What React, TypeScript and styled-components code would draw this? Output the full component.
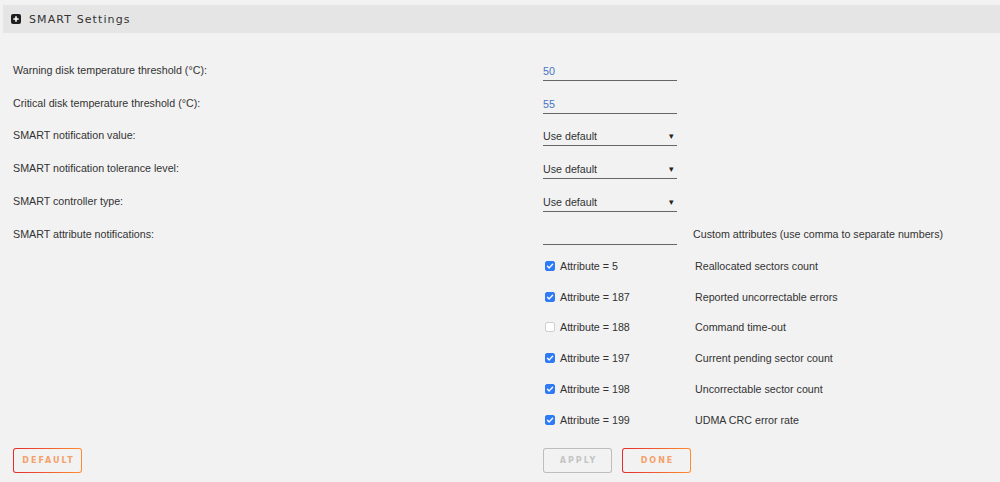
import React from 'react';
import styled, { createGlobalStyle } from 'styled-components';

const GlobalStyle = createGlobalStyle`
  html, body {
    margin: 0;
    padding: 0;
    background: #f2f2f2;
  }
  body {
    font-family: "Liberation Sans", Arial, sans-serif;
    color: #333;
  }
`;

const Page = styled.div`
  width: 1000px;
  height: 482px;
  padding: 5px 0 0 3px;
  box-sizing: border-box;
  overflow: hidden;
`;

const Header = styled.div`
  height: 28px;
  background: #e5e5e5;
  display: flex;
  align-items: center;
  gap: 8px;
  padding-left: 8px;
  box-sizing: border-box;
`;

const HeaderTitle = styled.span`
  font-family: "DejaVu Sans", sans-serif;
  font-size: 11px;
  letter-spacing: 1.1px;
  color: #333;
`;

const Form = styled.div`
  padding: 21px 0 0 10px;
`;

const Row = styled.div<{ $h?: number }>`
  display: grid;
  grid-template-columns: 514px 134px 1fr;
  column-gap: 16px;
  align-items: center;
  height: ${p => p.$h ?? 32.6}px;
  font-size: 10.7px;
`;

const Label = styled.div`
  color: #333;
`;

const Field = styled.div`
  height: 22px;
  border-bottom: 1px solid #666;
  box-sizing: border-box;
  display: flex;
  align-items: center;
  justify-content: space-between;
  padding: 3px 3px 0 0;
`;

const Value = styled.span`
  color: #4a72c4;
`;

const SelectText = styled.span`
  color: #333;
`;

const Arrow = styled.span`
  font-size: 8.5px;
  color: #222;
`;

const Note = styled.div`
  color: #333;
`;

const CheckCell = styled.label`
  display: flex;
  align-items: center;
  gap: 5px;
  padding-left: 2px;
  color: #333;
`;

const Box = styled.span<{ $on: boolean }>`
  width: 10px;
  height: 10px;
  border-radius: 2px;
  box-sizing: border-box;
  background: ${p => (p.$on ? '#2f7bf5' : '#fff')};
  border: 1px solid ${p => (p.$on ? '#2f7bf5' : '#d0d0d0')};
  display: flex;
  align-items: center;
  justify-content: center;
`;

const Desc = styled.div`
  padding-left: 2px;
  color: #333;
`;

const Buttons = styled.div`
  display: grid;
  grid-template-columns: 530px auto;
  margin-top: 13px;
`;

const ButtonGroup = styled.div`
  display: flex;
  gap: 10px;
`;

const Button = styled.button<{ $disabled?: boolean }>`
  width: 69px;
  height: 25px;
  border: 1px solid transparent;
  border-radius: 3px;
  background: ${p =>
    p.$disabled
      ? 'linear-gradient(#f2f2f2, #f2f2f2) padding-box, linear-gradient(#bdbdbd, #bdbdbd) border-box'
      : 'linear-gradient(#f2f2f2, #f2f2f2) padding-box, linear-gradient(90deg, #e22d2d, #ff8d33) border-box'};
  color: ${p => (p.$disabled ? '#c4c4c4' : '#f4a06a')};
  font-family: "DejaVu Sans", sans-serif;
  font-size: 8px;
  font-weight: bold;
  letter-spacing: 2px;
  padding: 0 0 0 2px;
  cursor: pointer;
`;

const PlusIcon = () => (
  <svg width="10" height="10" viewBox="0 0 10 10">
    <rect x="0" y="0" width="10" height="10" rx="2" fill="#1e1e1e" />
    <path d="M5 2.3v5.4M2.3 5h5.4" stroke="#fff" strokeWidth="1.6" />
  </svg>
);

const Check = () => (
  <svg width="8" height="8" viewBox="0 0 8 8">
    <path d="M1.5 4.2l1.7 1.7L6.6 2.2" fill="none" stroke="#fff" strokeWidth="1.4" strokeLinecap="round" strokeLinejoin="round" />
  </svg>
);

const attributes = [
  { id: 5, on: true, desc: 'Reallocated sectors count' },
  { id: 187, on: true, desc: 'Reported uncorrectable errors' },
  { id: 188, on: false, desc: 'Command time-out' },
  { id: 197, on: true, desc: 'Current pending sector count' },
  { id: 198, on: true, desc: 'Uncorrectable sector count' },
  { id: 199, on: true, desc: 'UDMA CRC error rate' },
];

const App: React.FC = () => {
  return (
    <Page>
      <GlobalStyle />
      <Header>
        <PlusIcon />
        <HeaderTitle>SMART Settings</HeaderTitle>
      </Header>
      <Form>
        <Row>
          <Label>Warning disk temperature threshold (°C):</Label>
          <Field><Value>50</Value></Field>
        </Row>
        <Row>
          <Label>Critical disk temperature threshold (°C):</Label>
          <Field><Value>55</Value></Field>
        </Row>
        <Row>
          <Label>SMART notification value:</Label>
          <Field><SelectText>Use default</SelectText><Arrow>▾</Arrow></Field>
        </Row>
        <Row>
          <Label>SMART notification tolerance level:</Label>
          <Field><SelectText>Use default</SelectText><Arrow>▾</Arrow></Field>
        </Row>
        <Row>
          <Label>SMART controller type:</Label>
          <Field><SelectText>Use default</SelectText><Arrow>▾</Arrow></Field>
        </Row>
        <Row $h={33.8}>
          <Label>SMART attribute notifications:</Label>
          <Field />
          <Note>Custom attributes (use comma to separate numbers)</Note>
        </Row>
        {attributes.map(a => (
          <Row key={a.id} $h={30.7}>
            <div />
            <CheckCell>
              <Box $on={a.on}>{a.on && <Check />}</Box>
              Attribute = {a.id}
            </CheckCell>
            <Desc>{a.desc}</Desc>
          </Row>
        ))}
        <Buttons>
          <div>
            <Button>DEFAULT</Button>
          </div>
          <ButtonGroup>
            <Button $disabled>APPLY</Button>
            <Button>DONE</Button>
          </ButtonGroup>
        </Buttons>
      </Form>
    </Page>
  );
};

export default App;
